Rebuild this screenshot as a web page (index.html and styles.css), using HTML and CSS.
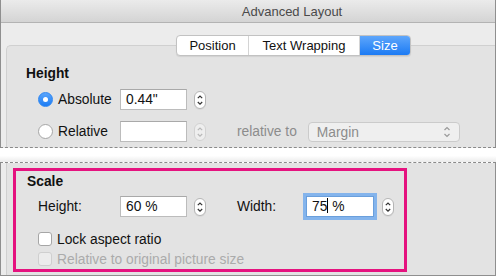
FILE: index.html
```html
<!DOCTYPE html>
<html lang="en">
<head>
    <meta charset="UTF-8">
    <meta name="viewport" content="width=device-width, initial-scale=1.0">
    <title>Advanced Layout</title>
    <link rel="stylesheet" href="styles.css">
</head>
<body>
    <div class="window">
        <div class="upper">
            <div class="titlebar">Advanced Layout</div>
            <div class="panel">
                <div class="tabs">
                    <div class="tab tab-position">Position</div>
                    <div class="tab tab-wrap">Text Wrapping</div>
                    <div class="tab tab-size active">Size</div>
                </div>
                <div class="group group-top">
                    <div class="section-title">Height</div>
                    <div class="row first-row">
                        <div class="choice">
                            <span class="radio checked"></span>
                            <span>Absolute</span>
                        </div>
                        <div class="field">0.44"</div>
                        <div class="stepper">
                            <svg width="12" height="18" viewBox="0 0 12 18"><path d="M3.8 7.2 L6 5 L8.2 7.2 M3.8 11 L6 13.2 L8.2 11" fill="none" stroke="#333" stroke-width="1.2"/></svg>
                        </div>
                    </div>
                    <div class="row second-row">
                        <div class="choice">
                            <span class="radio"></span>
                            <span>Relative</span>
                        </div>
                        <div class="field"></div>
                        <div class="stepper disabled">
                            <svg width="12" height="18" viewBox="0 0 12 18"><path d="M3.8 7.2 L6 5 L8.2 7.2 M3.8 11 L6 13.2 L8.2 11" fill="none" stroke="#b8b8b8" stroke-width="1.2"/></svg>
                        </div>
                        <span class="muted rel-label">relative to</span>
                        <div class="select">
                            <span>Margin</span>
                            <svg width="12" height="18" viewBox="0 0 12 18"><path d="M3.5 7 L6 4.5 L8.5 7 M3.5 11 L6 13.5 L8.5 11" fill="none" stroke="#9a9a9a" stroke-width="1.2"/></svg>
                        </div>
                    </div>
                </div>
            </div>
        </div>

        <div class="tear"></div>

        <div class="lower">
            <div class="group group-bottom">
                <div class="highlight">
                    <div class="section-title scale-title">Scale</div>
                    <div class="row scale-row">
                        <span class="label">Height:</span>
                        <div class="field">60 %</div>
                        <div class="stepper">
                            <svg width="12" height="18" viewBox="0 0 12 18"><path d="M3.8 7.2 L6 5 L8.2 7.2 M3.8 11 L6 13.2 L8.2 11" fill="none" stroke="#333" stroke-width="1.2"/></svg>
                        </div>
                        <span class="label width-label">Width:</span>
                        <div class="field focused">75<span class="caret"></span> %</div>
                        <div class="stepper">
                            <svg width="12" height="18" viewBox="0 0 12 18"><path d="M3.8 7.2 L6 5 L8.2 7.2 M3.8 11 L6 13.2 L8.2 11" fill="none" stroke="#333" stroke-width="1.2"/></svg>
                        </div>
                    </div>
                    <div class="check-row lock-row">
                        <span class="checkbox"></span>
                        <span>Lock aspect ratio</span>
                    </div>
                    <div class="check-row muted orig-row">
                        <span class="checkbox disabled"></span>
                        <span>Relative to original picture size</span>
                    </div>
                </div>
            </div>
        </div>
    </div>
</body>
</html>
```

FILE: styles.css
```css
body {
    margin: 0;
    font-family: "Liberation Sans", Arial, sans-serif;
    font-size: 13.8px;
    color: #111;
    background-color: #ececec;
}
.window {
    width: 496px;
    height: 276px;
    display: flex;
    flex-direction: column;
    overflow: hidden;
}
.upper {
    height: 147px;
    display: flex;
    flex-direction: column;
    border-left: 1px solid #8f8f8f;
    border-right: 1px solid #8f8f8f;
}
.titlebar {
    height: 22px;
    line-height: 23px;
    border-bottom: 1px solid #b3b3b3;
    background: linear-gradient(#ebebeb, #d4d4d4);
    color: #4a4a4a;
    font-size: 13px;
    text-align: center;
    padding-left: 88px;
}
.panel {
    flex: 1;
    display: flex;
    flex-direction: column;
    background-color: #ececec;
}

/* segmented control */
.tabs {
    position: relative;
    z-index: 2;
    display: flex;
    align-self: flex-start;
    margin: 12px 0 -11px 175px;
    height: 19px;
    border: 1px solid #c2c2c2;
    border-radius: 4px;
    background: #fff;
    box-shadow: 0 1px 1px rgba(0, 0, 0, 0.08);
    font-size: 13px;
    line-height: 19px;
    overflow: hidden;
}
.tab {
    text-align: center;
    border-right: 1px solid #d4d4d4;
}
.tab-position { width: 71px; }
.tab-wrap { width: 110px; }
.tab-size { width: 50px; border-right: none; }
.tab.active {
    background: linear-gradient(#5ea6fb, #1c7bf4);
    color: #fff;
}

.group {
    flex: 1;
    margin-left: 5px;
    background-color: #e3e3e3;
    border-left: 1px solid #d0d0d0;
}
.group-top {
    border-top: 1px solid #d0d0d0;
    border-top-left-radius: 5px;
    padding-left: 19px;
}
.section-title {
    font-weight: bold;
    line-height: 16px;
}
.group-top .section-title {
    padding-top: 20px;
}
.row {
    display: flex;
    align-items: center;
    height: 21px;
}
.first-row {
    margin-top: 7px;
    padding-left: 12px;
}
.second-row {
    margin-top: 11px;
    padding-left: 12px;
}
.choice {
    width: 82px;
    display: flex;
    align-items: center;
    gap: 5px;
}
.radio {
    width: 13px;
    height: 13px;
    border: 1px solid #a6a6a6;
    border-radius: 50%;
    background: #fff;
    box-sizing: content-box;
    display: flex;
    align-items: center;
    justify-content: center;
}
.radio.checked {
    border-color: #2d86f2;
    background: linear-gradient(#5aa5fb, #1b7cf4);
}
.radio.checked::after {
    content: "";
    width: 5px;
    height: 5px;
    border-radius: 50%;
    background: #fff;
}
.field {
    width: 57px;
    height: 19px;
    line-height: 20px;
    padding-left: 5px;
    padding-right: 3px;
    border: 1px solid #bcbcbc;
    border-top-color: #a9a9a9;
    background: #fff;
}
.stepper {
    width: 10px;
    height: 16px;
    margin-left: 7px;
    border: 1px solid #b5b5b5;
    border-radius: 6px;
    background: #fff;
    display: flex;
    align-items: center;
    justify-content: center;
    box-shadow: 0 1px 0 rgba(0, 0, 0, 0.05);
}
.stepper svg {
    display: block;
    flex: none;
}
.stepper.disabled {
    border-color: #d2d2d2;
    background: #eeeeee;
    box-shadow: none;
}
.muted {
    color: #8c8c8c;
}
.rel-label {
    margin-left: 31px;
}
.select {
    width: 142px;
    height: 18px;
    margin-left: 11px;
    margin-top: 1px;
    padding-left: 8px;
    border: 1px solid #cbcbcb;
    border-radius: 4px;
    background: #efefef;
    color: #8c8c8c;
    display: flex;
    align-items: center;
    justify-content: space-between;
}
.select svg {
    margin-right: 6px;
}

/* torn edge */
.tear {
    height: 14px;
    flex: none;
    border-top: 1px dashed #8a8a8a;
    border-bottom: 1px dashed #8a8a8a;
    background: linear-gradient(#ffffff 55%, #ebebeb);
}

.lower {
    flex: 1;
    display: flex;
    flex-direction: column;
    border-left: 1px solid #8f8f8f;
    border-right: 1px solid #8f8f8f;
    border-bottom: 1px solid #8f8f8f;
    background-color: #ececec;
}
.group-bottom {
    display: flex;
    flex-direction: column;
}
.highlight {
    width: 388px;
    height: 98px;
    margin: 5px 0 0 6px;
    border: 3px solid #e5137f;
}
.scale-title {
    padding: 3px 0 0 11px;
}
.scale-row {
    margin-top: 6px;
    padding-left: 22px;
}
.label {
    width: 82px;
}
.width-label {
    width: 69px;
    margin-left: 31px;
}
.field.focused {
    width: 58px;
    border-color: #6a9fdc;
    box-shadow: 0 0 0 3px #84b4ec;
}
.caret {
    display: inline-block;
    width: 1px;
    height: 15px;
    background: #000;
    vertical-align: -2px;
}
.scale-row .focused + .stepper {
    margin-left: 8px;
}
.check-row {
    display: flex;
    align-items: center;
    gap: 5px;
    height: 14px;
    padding-left: 22px;
}
.lock-row {
    margin-top: 15px;
}
.orig-row {
    margin-top: 6px;
    color: #ababab;
}
.checkbox {
    width: 12px;
    height: 12px;
    border: 1px solid #a6a6a6;
    border-radius: 3px;
    background: #fff;
}
.checkbox.disabled {
    border-color: #cfcfcf;
    background: #ececec;
}
```
